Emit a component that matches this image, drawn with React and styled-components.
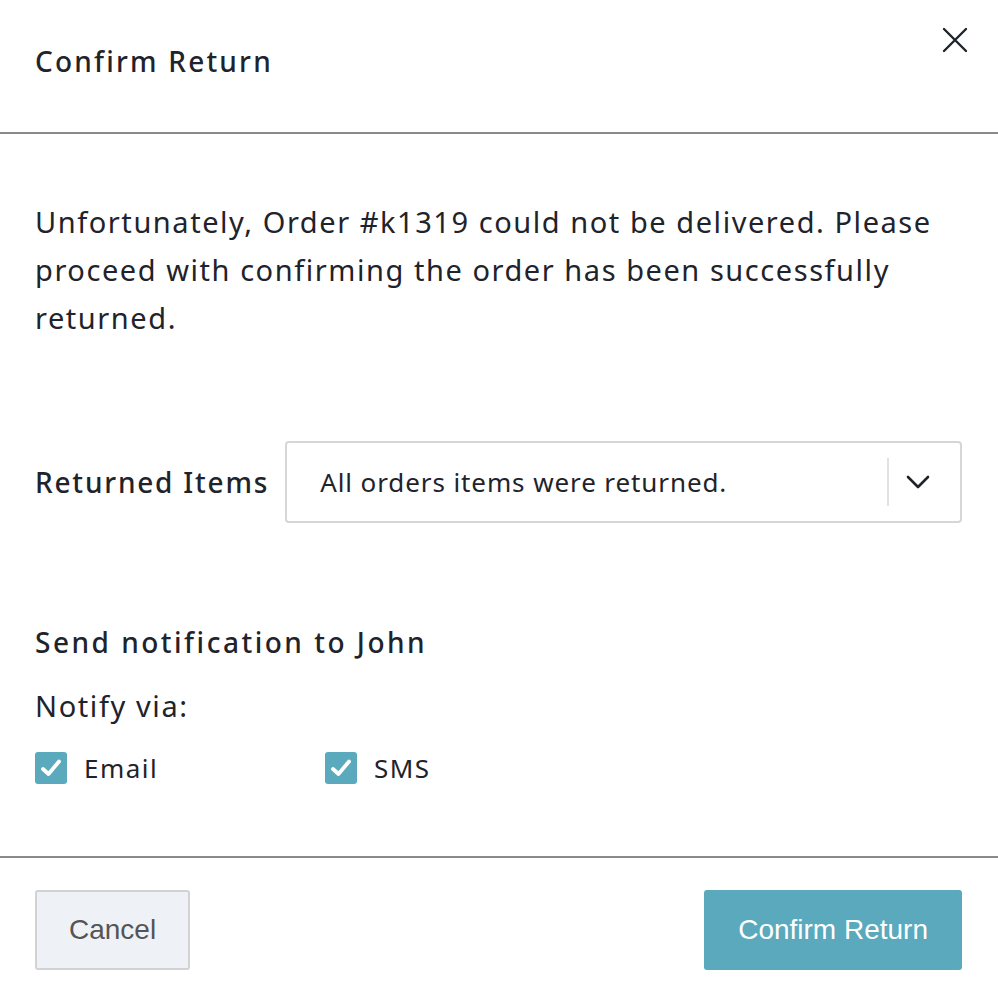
import React, { useState } from "react";
import styled, { createGlobalStyle } from "styled-components";

const GlobalStyle = createGlobalStyle`
  html, body {
    margin: 0;
    padding: 0;
    background: #fff;
  }
  body {
    font-family: "Noto Sans", "Open Sans", sans-serif;
    color: #1f232b;
  }
`;

const Modal = styled.div`
  width: 998px;
  height: 988px;
  display: flex;
  flex-direction: column;
  background: #fff;
`;

const Header = styled.div`
  height: 134px;
  display: flex;
  align-items: flex-start;
  justify-content: space-between;
  padding: 0 28px 0 35px;
  border-bottom: 2px solid #8a8a8a;
  box-sizing: border-box;
`;

const Title = styled.h2`
  margin: 42px 0 0;
  font-size: 28px;
  line-height: 38px;
  font-weight: 500;
  letter-spacing: 2.2px;
`;

const Close = styled.button`
  margin-top: 25px;
  width: 30px;
  height: 30px;
  padding: 0;
  border: none;
  background: none;
  cursor: pointer;
  display: flex;
  align-items: center;
  justify-content: center;
`;

const Body = styled.div`
  flex: 1;
  padding: 0 36px 0 35px;
  border-bottom: 2px solid #8a8a8a;
`;

const Message = styled.p`
  margin: 64px 0 0;
  font-size: 29px;
  line-height: 48px;
  letter-spacing: 1.55px;
`;

const FieldRow = styled.div`
  margin-top: 99px;
  display: flex;
  align-items: center;
  gap: 16px;
`;

const Label = styled.label`
  font-size: 28px;
  font-weight: 500;
  letter-spacing: 1.8px;
  white-space: nowrap;
`;

const Select = styled.div`
  flex: 1;
  height: 82px;
  border: 2px solid #d6d6d6;
  border-radius: 4px;
  box-sizing: border-box;
  display: flex;
  align-items: center;
  padding-left: 33px;
  font-size: 26px;
  letter-spacing: 0.9px;
`;

const SelectValue = styled.span`
  flex: 1;
`;

const SelectToggle = styled.div`
  width: 73px;
  height: 48px;
  border-left: 2px solid #e2e2e2;
  display: flex;
  align-items: center;
  padding-left: 17px;
  box-sizing: border-box;
`;

const SectionTitle = styled.h3`
  margin: 100px 0 0;
  font-size: 28px;
  line-height: 38px;
  font-weight: 500;
  letter-spacing: 2.5px;
`;

const Sub = styled.div`
  margin-top: 26px;
  font-size: 29px;
  line-height: 38px;
  letter-spacing: 1.6px;
`;

const Options = styled.div`
  margin-top: 25px;
  display: flex;
`;

const Option = styled.label`
  width: 290px;
  display: flex;
  align-items: center;
  gap: 17px;
  font-size: 26px;
  letter-spacing: 1.5px;
  cursor: pointer;
`;

const Box = styled.span`
  width: 32px;
  height: 32px;
  border-radius: 3px;
  background: ${(p) => (p.checked ? "#5aa9bc" : "#fff")};
  border: ${(p) => (p.checked ? "none" : "2px solid #bbb")};
  box-sizing: border-box;
  display: flex;
  align-items: center;
  justify-content: center;
`;

const Footer = styled.div`
  height: 130px;
  display: flex;
  align-items: flex-start;
  justify-content: space-between;
  padding: 32px 36px 0 35px;
  box-sizing: border-box;
`;

const Button = styled.button`
  height: 80px;
  padding: 0 ${(p) => (p.primary ? "34px" : "32px")};
  border-radius: 3px;
  border: ${(p) => (p.primary ? "none" : "2px solid #d2d2d2")};
  background: ${(p) => (p.primary ? "#5aa9bc" : "#eef1f5")};
  color: ${(p) => (p.primary ? "#fff" : "#555")};
  font-family: "Liberation Sans", Arial, sans-serif;
  font-size: 28px;
  cursor: pointer;
`;

const Check = () => (
  <svg width="22" height="20" viewBox="0 0 22 20" fill="none">
    <path d="M3 11 L8.5 16 L19 3.5" stroke="#fff" strokeWidth="3.8" strokeLinecap="round" strokeLinejoin="round" />
  </svg>
);

const App = () => {
  const [email, setEmail] = useState(true);
  const [sms, setSms] = useState(true);

  return (
    <Modal>
      <GlobalStyle />
      <Header>
        <Title>Confirm Return</Title>
        <Close aria-label="close">
          <svg width="26" height="26" viewBox="0 0 26 26">
            <path d="M2 2 L24 24 M24 2 L2 24" stroke="#1f232b" strokeWidth="2.4" strokeLinecap="round" />
          </svg>
        </Close>
      </Header>
      <Body>
        <Message>
          Unfortunately, Order #k1319 could not be delivered. Please proceed with confirming the order has been successfully returned.
        </Message>
        <FieldRow>
          <Label>Returned Items</Label>
          <Select>
            <SelectValue>All orders items were returned.</SelectValue>
            <SelectToggle>
              <svg width="24" height="14" viewBox="0 0 24 14">
                <path d="M2 2 L12 12 L22 2" stroke="#1f232b" strokeWidth="2.6" fill="none" strokeLinecap="round" strokeLinejoin="round" />
              </svg>
            </SelectToggle>
          </Select>
        </FieldRow>
        <SectionTitle>Send notification to John</SectionTitle>
        <Sub>Notify via:</Sub>
        <Options>
          <Option onClick={() => setEmail(!email)}>
            <Box checked={email}>{email && <Check />}</Box>
            Email
          </Option>
          <Option onClick={() => setSms(!sms)}>
            <Box checked={sms}>{sms && <Check />}</Box>
            SMS
          </Option>
        </Options>
      </Body>
      <Footer>
        <Button>Cancel</Button>
        <Button primary>Confirm Return</Button>
      </Footer>
    </Modal>
  );
};

export default App;
